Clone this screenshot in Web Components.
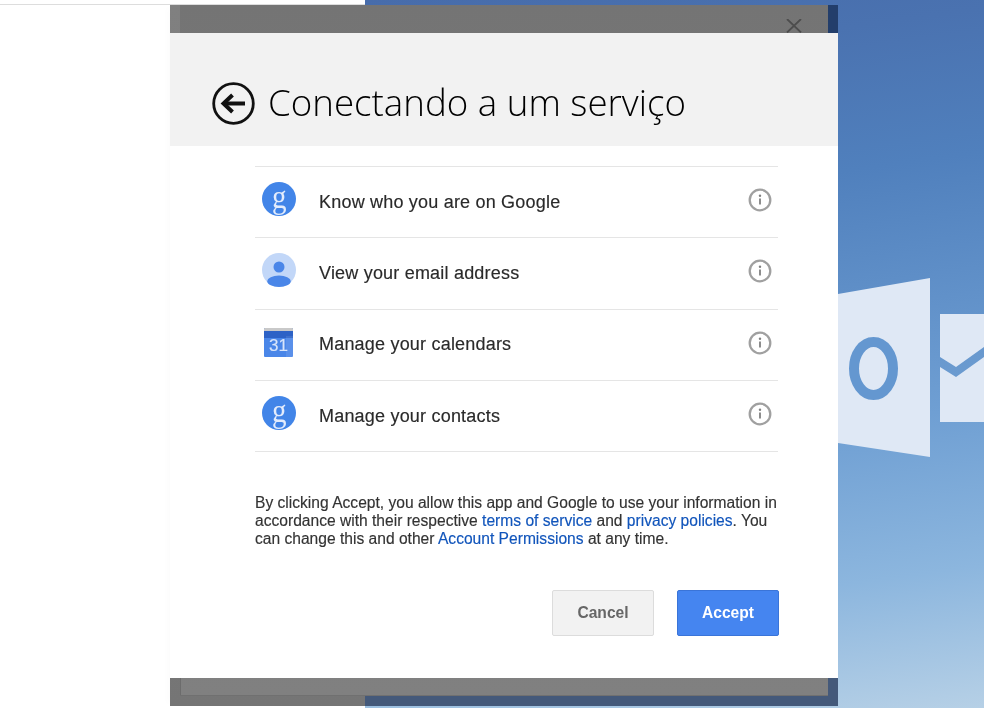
<!DOCTYPE html>
<html lang="pt"><head><meta charset="utf-8"><title>Conectando a um serviço</title>
<style>html,body{margin:0;height:100%;overflow:hidden;background:#fff}</style></head>
<body>
<desktop-backdrop>
  <consent-dialog heading="Conectando a um serviço">
    <perm-row label="Know who you are on Google"><g-badge></g-badge></perm-row>
    <perm-row label="View your email address"><person-badge></person-badge></perm-row>
    <perm-row label="Manage your calendars"><cal-badge></cal-badge></perm-row>
    <perm-row label="Manage your contacts"><g-badge></g-badge></perm-row>
    <span slot="legal">By clicking Accept, you allow this app and Google to use your information in accordance with their respective <a href="#">terms of service</a> and <a href="#">privacy policies</a>. You can change this and other <a href="#">Account Permissions</a> at any time.</span>
  </consent-dialog>
</desktop-backdrop>
<template id="bd">
<style>
:host{display:flex;width:984px;height:708px;position:relative;overflow:hidden;font-family:"Liberation Sans",Arial,sans-serif}
.left{width:365px;background:#fff;position:relative}
.left::before{content:"";display:block;height:4px;border-bottom:1px solid #ddd}
.right{flex:1;background:linear-gradient(172deg,#476cab 0%,#4a72b0 12%,#5080bd 30%,#6f9fd3 62%,#8cb6de 82%,#b6d0e6 100%);position:relative}
.logo{position:absolute;left:0;top:0;width:984px;height:708px;pointer-events:none}
.shade{position:absolute;left:170px;top:5px;width:668px;height:701px;background:linear-gradient(#808080,#757575);box-shadow:-6px 0 6px -3px rgba(0,0,0,.015)}
.shade::before{content:"";position:absolute;left:195px;right:0;top:691px;height:10px;background:#44597a}
.inner{position:absolute;left:10px;right:10px;top:0;height:691px;background:linear-gradient(#747474,#808080);border-bottom:1px solid #707070;box-sizing:border-box}
.inner::after{content:"";position:absolute;left:0;bottom:0;width:1px;height:18px;background:#6c6c6c}
.tint{position:absolute;left:658px;top:0;width:10px;height:692px;background:#233e6b}
.tint.b{background:#44597a;top:645px;height:56px}
.x{position:absolute;left:786px;top:19px}
</style>
<div class="left"></div>
<div class="right"></div>
<svg class="logo" viewBox="0 0 984 708"><polygon points="838,294 930,278 930,457 838,443" fill="#dfe8f5"/><ellipse cx="873.5" cy="368.500" rx="19.500" ry="26.500" fill="none" stroke="#6497d0" stroke-width="10"/><path fill-rule="evenodd" fill="#dfe8f5" d="M940 314H984V347L956 367L940 357ZM940 367L956 377L984 357V422H940Z"/></svg>
<div class="shade"><div class="inner"></div><div class="tint"></div><div class="tint b"></div></div>
<svg class="x" width="16" height="14" viewBox="0 0 16 14"><path d="M1 0L15 13.500M15 0L1 13.500" stroke="#4d4d4d" stroke-width="1.800" fill="none"/></svg>
<slot></slot>
</template>
<template id="dlg">
<style>
:host{display:flex;flex-direction:column;position:absolute;left:170px;top:33px;width:668px;height:645px;background:#fff;color:#222;box-sizing:border-box;filter:blur(.3px)}
header{height:113px;background:#f2f2f2;display:flex;align-items:center;gap:13px;padding:27px 0 0 42px;box-sizing:border-box}
h1{margin:0;font:300 36.700px/1.2 "Open Sans",sans-serif;color:#000;position:relative;top:-1px}
.body{display:flex;flex-direction:column;padding:20px 60px 0 85px;flex:1}
.list{border-top:1px solid #e5e5e5}
.legal{margin-top:42px;font-size:15.600px;line-height:18px;color:#333;-webkit-text-stroke:.15px currentColor}
::slotted(span){display:block}
.acts{display:flex;justify-content:flex-end;gap:23px;margin:41.500px -1px 0 0}
button{width:102px;height:46px;box-sizing:border-box;border-radius:2px;font:bold 15.600px "Liberation Sans",Arial,sans-serif;padding:0}
.c{background:#f2f2f2;border:1px solid #dcdcdc;color:#666}
.a{background:#4585f0;border:1px solid #3a74d8;color:#fff}
</style>
<header>
<svg width="43" height="43" viewBox="0 0 43 43"><circle cx="21.500" cy="21.500" r="19.800" fill="none" stroke="#111" stroke-width="2.800"/><path d="M33 21.500H14" stroke="#111" stroke-width="4" fill="none"/><path d="M20.500 13L11.500 21.500L20.500 30" stroke="#111" stroke-width="4" fill="none"/></svg>
<h1></h1></header>
<div class="body">
<div class="list"><slot></slot></div>
<div class="legal"><slot name="legal"></slot></div>
<div class="acts"><button class="c">Cancel</button><button class="a">Accept</button></div>
</div>
</template>
<template id="row">
<style>
:host{display:flex;align-items:center;height:71.250px;box-sizing:border-box;border-bottom:1px solid #e5e5e5;padding:0 7px;font:18px "Liberation Sans",Arial,sans-serif;color:#2a2a2a}
.ic{width:34px;height:34px;margin-right:23px;display:flex;margin-top:-6px}
.t{flex:1;letter-spacing:.2px;padding-top:.6px;-webkit-text-stroke:.15px currentColor}
svg{margin:-4px -1px 0 0}
</style>
<div class="ic"><slot></slot></div><div class="t"></div>
<svg width="24" height="24" viewBox="0 0 24 24"><circle cx="12" cy="12" r="10.300" fill="none" stroke="#a0a0a0" stroke-width="2.300"/><path d="M12 10.500V16.500" stroke="#808080" stroke-width="1.800"/><circle cx="12" cy="7.800" r="1.200" fill="#808080"/></svg>
</template>
<template id="g">
<style>
:host{display:flex;width:34px;height:34px;border-radius:50%;background:#4285e8;justify-content:center;color:#e3ecfc;font:33px/34px "Liberation Serif",serif}
span{display:block;height:34px;transform:translateY(-2px) scaleX(.88)}
</style><span>g</span>
</template>
<template id="p">
<style>:host{display:block;width:34px;height:34px}svg{display:block}</style>
<svg width="34" height="34" viewBox="0 0 34 34"><circle cx="17" cy="17" r="17" fill="#c2d7f8"/><circle cx="17" cy="14" r="5.500" fill="#4a86e8"/><ellipse cx="17" cy="28.300" rx="11.700" ry="5.700" fill="#4a86e8"/></svg>
</template>
<template id="cal">
<style>
:host{display:block;width:29px;height:29px;position:relative;margin:3px 0 0 2px;background:#4a86e8;border-radius:1px;overflow:hidden}
.top{height:10px;background:linear-gradient(#c9c9c9 0 3px,#2d62c6 3px)}
.n{position:absolute;left:0;right:0;top:9px;text-align:center;font:17px/18px "Liberation Sans",sans-serif;color:#d9e5fa;-webkit-text-stroke:.15px currentColor}
.n::before{content:"";position:absolute;right:0;top:-1px;bottom:-6px;width:7px;background:rgba(255,255,255,.09)}
</style><div class="top"></div><div class="n">31</div>
</template>
<script>
const make=(name,id,init)=>customElements.define(name,class extends HTMLElement{connectedCallback(){if(this.shadowRoot)return;const r=this.attachShadow({mode:'open'});r.appendChild(document.getElementById(id).content.cloneNode(true));init&&init(r,this)}});
make('desktop-backdrop','bd');
make('g-badge','g');
make('person-badge','p');
make('cal-badge','cal');
make('perm-row','row',(r,h)=>{r.querySelector('.t').textContent=h.getAttribute('label')});
make('consent-dialog','dlg',(r,h)=>{r.querySelector('h1').textContent=h.getAttribute('heading')});
</script>
<style>consent-dialog a{color:#1155bb;text-decoration:none}</style>
</body></html>
